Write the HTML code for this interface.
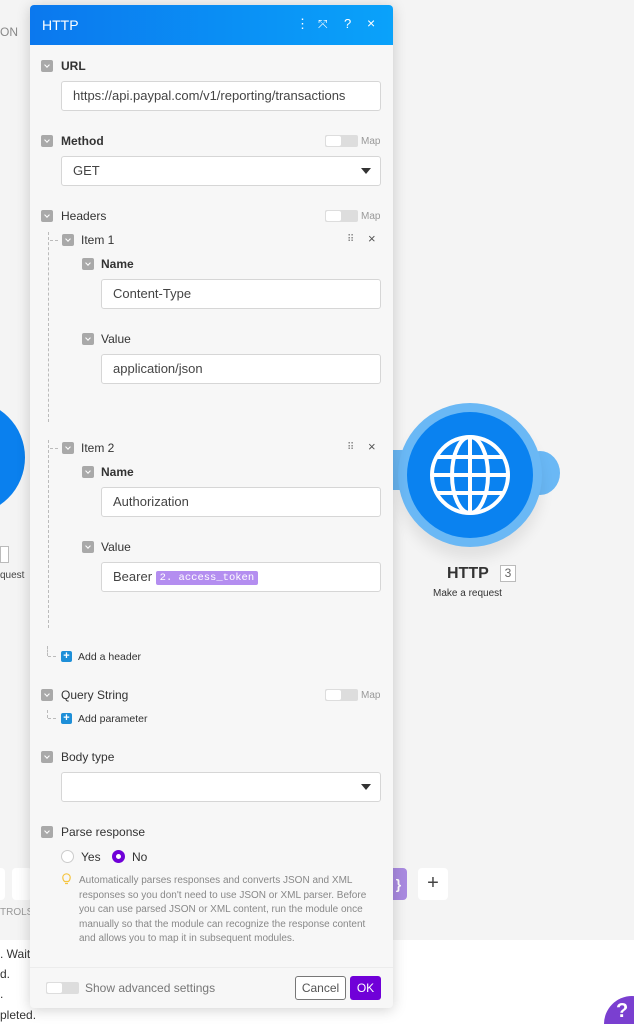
<!DOCTYPE html>
<html style="width:634px;height:1024px;overflow:hidden"><head><meta charset="utf-8"><style>
*{box-sizing:border-box;margin:0;padding:0}
body{width:634px;height:1024px;overflow:hidden;background:#f4f4f4;font-family:"Liberation Sans",sans-serif;position:relative;color:#333}
.a{position:absolute}
.t{position:absolute;font-size:12px;line-height:14px;color:#333;white-space:nowrap}
.b{font-weight:bold}
.cb{position:absolute;width:12px;height:12px;background:#a9a9a9;border-radius:2px}
.cb:after{content:"";position:absolute;left:3.5px;top:2.5px;width:3px;height:3px;border-right:1.2px solid #fff;border-bottom:1.2px solid #fff;transform:rotate(45deg)}
.in{position:absolute;background:#fff;border:1px solid #d6d6d6;border-radius:3px;height:30px;font-size:13px;color:#444;padding-left:11px;line-height:28px;white-space:nowrap;overflow:hidden}
.tg{position:absolute;width:33px;height:12px;background:#ddd;border-radius:2px}
.tg:before{content:"";position:absolute;left:1px;top:1px;width:15px;height:10px;background:#fff;border-radius:2px}
.map{position:absolute;font-size:10px;color:#999;line-height:12px}
.dl{position:absolute;border-left:1px dashed #bbb;width:0}
.dh{position:absolute;border-top:1px dashed #bbb;height:0;width:8px}
.plus{position:absolute;width:11px;height:11px;background:#1e8fd8;border-radius:2px;color:#fff;font-size:11px;line-height:11px;text-align:center;font-weight:bold}
.arr{position:absolute;width:0;height:0;border-left:5px solid transparent;border-right:5px solid transparent;border-top:6px solid #333}
</style></head><body>
<div class="t" style="left:0;top:25px;font-size:12px;color:#888">ON</div>
<div class="a" style="left:-90px;top:400px;width:115px;height:115px;border-radius:50%;background:#0a80ee"></div>
<div class="a" style="left:0;top:546px;width:9px;height:17px;border:1px solid #bbb;background:#fff"></div>
<div class="t" style="left:0;top:569px;font-size:10px;color:#444">quest</div>
<div class="a" style="left:0;top:940px;width:634px;height:84px;background:#fff"></div>
<div class="a" style="left:0;top:868px;width:5px;height:32px;background:#fff;border-radius:0 4px 4px 0"></div>
<div class="a" style="left:12px;top:868px;width:20px;height:32px;background:#fff;border-radius:4px"></div>
<div class="t" style="left:0;top:906px;font-size:10px;color:#999">TROLS</div>
<div class="a" style="left:390px;top:868px;width:17px;height:32px;background:#a98ae0;border-radius:0 4px 4px 0;color:#fff;font-weight:bold;font-size:14px;line-height:32px;text-align:center">}</div>
<div class="a" style="left:418px;top:868px;width:30px;height:32px;background:#fff;border-radius:4px;font-size:20px;line-height:30px;text-align:center;color:#444">+</div>
<div class="t" style="left:0;top:947px;color:#333">. Wait</div>
<div class="t" style="left:0;top:967px;color:#333">d.</div>
<div class="t" style="left:0;top:987px;color:#333">.</div>
<div class="t" style="left:0;top:1008px;color:#333">pleted.</div>
<div class="a" style="left:604px;top:996px;width:56px;height:56px;border-radius:50%;background:#7a3fd0;color:#fff;font-weight:bold;font-size:20px;padding:4px 0 0 12px">?</div>
<div class="a" style="left:386px;top:450px;width:20px;height:40px;background:#6ab8f5;border-radius:4px"></div>
<div class="a" style="left:520px;top:451px;width:40px;height:44px;border-radius:50%;background:#6ab8f5"></div>
<div class="a" style="left:398px;top:403px;width:144px;height:144px;border-radius:50%;background:#6ab8f5;box-shadow:0 12px 14px rgba(0,0,0,.08)"></div>
<div class="a" style="left:407px;top:412px;width:126px;height:126px;border-radius:50%;background:#0a82f0"></div>
<svg class="a" style="left:428px;top:433px" width="84" height="84" viewBox="0 0 84 84" fill="none" stroke="#fff" stroke-width="4">
<circle cx="42" cy="42" r="38"/><ellipse cx="42" cy="42" rx="18" ry="38"/><line x1="42" y1="4" x2="42" y2="80"/>
<line x1="4" y1="42" x2="80" y2="42"/><line x1="9" y1="24" x2="75" y2="24"/><line x1="9" y1="60" x2="75" y2="60"/></svg>
<div class="t b" style="left:447px;top:565px;font-size:16px;line-height:18px;color:#333">HTTP</div>
<div class="a" style="left:500px;top:565px;width:16px;height:17px;border:1px solid #bbb;background:#fff;font-size:12px;text-align:center;line-height:15px;color:#666">3</div>
<div class="t" style="left:433px;top:587px;font-size:10px;color:#333">Make a request</div>
<div class="a" style="left:30px;top:5px;width:363px;height:1003px;background:#f7f7f7;border-radius:4px;box-shadow:0 2px 14px rgba(0,0,0,.18);overflow:hidden">
<div class="a" style="left:0;top:0;width:363px;height:40px;background:linear-gradient(90deg,#0b78ee,#0aa2fa)"></div>
<div class="t" style="left:12px;top:12px;color:#fff;font-size:14px;line-height:16px">HTTP</div>
<div class="t" style="left:266px;top:12px;color:#fff;font-size:13px">⋮</div>
<div class="t" style="left:288px;top:12px;color:#fff;font-size:12px">⤧</div>
<div class="t" style="left:314px;top:12px;color:#fff;font-size:13px">?</div>
<div class="t" style="left:337px;top:11px;color:#fff;font-size:14px">×</div>
<div class="a" style="left:0;top:962px;width:363px;height:1px;background:#ececec"></div>
</div>
<div class="cb" style="left:41px;top:60px"></div><div class="t b" style="left:61px;top:59px">URL</div>
<div class="in" style="left:61px;top:81px;width:320px">https://api.paypal.com/v1/reporting/transactions</div>
<div class="cb" style="left:41px;top:135px"></div><div class="t b" style="left:61px;top:134px">Method</div>
<div class="tg" style="left:325px;top:135px"></div><div class="map" style="left:361px;top:136px">Map</div>
<div class="in" style="left:61px;top:156px;width:320px">GET</div><div class="arr" style="left:361px;top:168px"></div>
<div class="cb" style="left:41px;top:210px"></div><div class="t" style="left:61px;top:209px">Headers</div>
<div class="tg" style="left:325px;top:210px"></div><div class="map" style="left:361px;top:211px">Map</div>
<div class="dl" style="left:48px;top:232px;height:190px"></div><div class="dh" style="left:50px;top:240px"></div>
<div class="cb" style="left:62px;top:234px"></div><div class="t" style="left:81px;top:233px">Item 1</div>
<div class="t" style="left:347px;top:233px;font-size:10px;color:#888">⠿</div><div class="t" style="left:368px;top:232px;font-size:13px;color:#555">×</div>
<div class="cb" style="left:82px;top:258px"></div><div class="t b" style="left:101px;top:257px">Name</div>
<div class="in" style="left:101px;top:279px;width:280px">Content-Type</div>
<div class="cb" style="left:82px;top:333px"></div><div class="t" style="left:101px;top:332px">Value</div>
<div class="in" style="left:101px;top:354px;width:280px">application/json</div>
<div class="dl" style="left:48px;top:440px;height:188px"></div><div class="dh" style="left:50px;top:448px"></div>
<div class="cb" style="left:62px;top:442px"></div><div class="t" style="left:81px;top:441px">Item 2</div>
<div class="t" style="left:347px;top:441px;font-size:10px;color:#888">⠿</div><div class="t" style="left:368px;top:440px;font-size:13px;color:#555">×</div>
<div class="cb" style="left:82px;top:466px"></div><div class="t b" style="left:101px;top:465px">Name</div>
<div class="in" style="left:101px;top:487px;width:280px">Authorization</div>
<div class="cb" style="left:82px;top:541px"></div><div class="t" style="left:101px;top:540px">Value</div>
<div class="in" style="left:101px;top:562px;width:280px">Bearer <span style="display:inline-block;background:#b48ef0;color:#fff;font-family:'Liberation Mono',monospace;font-size:10.5px;line-height:14px;padding:0 4px;border-radius:2px;vertical-align:1px">2. access_token</span></div>
<div class="dl" style="left:47px;top:646px;height:10px"></div><div class="dh" style="left:48px;top:656px"></div>
<div class="plus" style="left:61px;top:651px">+</div><div class="t" style="left:78px;top:650px;font-size:10.5px">Add a header</div>
<div class="cb" style="left:41px;top:689px"></div><div class="t" style="left:61px;top:688px">Query String</div>
<div class="tg" style="left:325px;top:689px"></div><div class="map" style="left:361px;top:690px">Map</div>
<div class="dl" style="left:47px;top:710px;height:8px"></div><div class="dh" style="left:48px;top:718px"></div>
<div class="plus" style="left:61px;top:713px">+</div><div class="t" style="left:78px;top:712px;font-size:10.5px">Add parameter</div>
<div class="cb" style="left:41px;top:751px"></div><div class="t" style="left:61px;top:750px">Body type</div>
<div class="in" style="left:61px;top:772px;width:320px"></div><div class="arr" style="left:361px;top:784px"></div>
<div class="cb" style="left:41px;top:826px"></div><div class="t" style="left:61px;top:825px">Parse response</div>
<div class="a" style="left:61px;top:850px;width:13px;height:13px;border-radius:50%;border:1px solid #ccc;background:#fff"></div>
<div class="t" style="left:81px;top:850px">Yes</div>
<div class="a" style="left:112px;top:850px;width:13px;height:13px;border-radius:50%;border:4px solid #7000d8;background:#fff"></div>
<div class="t" style="left:132px;top:850px">No</div>
<svg class="a" style="left:62px;top:873px" width="9" height="12" viewBox="0 0 9 12" fill="none" stroke="#f5c542" stroke-width="1.2"><path d="M2.5 8.5C1 7 .8 5.5.8 4.5a3.7 3.7 0 0 1 7.4 0c0 1-.2 2.5-1.7 4zM3 10.5h3"/></svg>
<div class="a" style="left:79px;top:874px;width:300px;font-size:10px;line-height:14.6px;color:#888">Automatically parses responses and converts JSON and XML responses so you don't need to use JSON or XML parser. Before you can use parsed JSON or XML content, run the module once manually so that the module can recognize the response content and allows you to map it in subsequent modules.</div>
<div class="tg" style="left:46px;top:982px"></div>
<div class="t" style="left:85px;top:981px;color:#777">Show advanced settings</div>
<div class="a" style="left:295px;top:976px;width:51px;height:24px;border:1px solid #777;border-radius:3px;background:#fff;font-size:12px;color:#555;text-align:center;line-height:22px">Cancel</div>
<div class="a" style="left:350px;top:976px;width:31px;height:24px;border-radius:3px;background:#7000d8;font-size:12px;color:#fff;text-align:center;line-height:24px">OK</div>
</body></html>
